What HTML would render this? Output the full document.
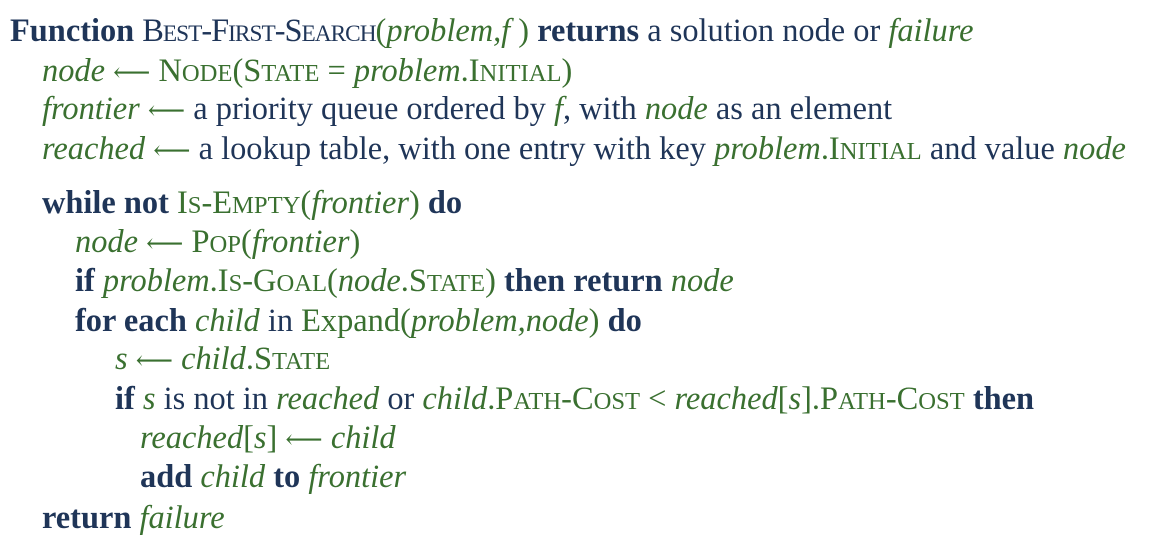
<!DOCTYPE html>
<html><head><meta charset="utf-8"><style>
body{margin:0;width:1164px;height:540px;background:#fff;overflow:hidden}
.l{position:absolute;white-space:nowrap;font-family:"Liberation Serif",serif;font-size:32.4px;line-height:34px;color:#1f3558}
.g{color:#3a7030}
i{font-style:italic}
b{font-weight:bold;color:#1f3558}
small{font-size:.76em}
.t{letter-spacing:-1px}
.t small{font-size:.72em}
.a{font-family:"DejaVu Serif","Liberation Serif",serif;font-size:26px}
</style></head><body>
<div class="l" style="left:10px;top:14px"><b>Function</b> <span class="t">B<small>EST</small>-F<small>IRST</small>-S<small>EARCH</small></span><span class="g">(<i>problem,f</i> )</span> <b>returns</b> a solution node or <i class="g">failure</i></div>
<div class="l g" style="left:42px;top:54px"><i>node</i> <span class="a">⟵</span> N<small>ODE</small>(S<small>TATE</small> = <i>problem</i>.I<small>NITIAL</small>)</div>
<div class="l" style="left:42px;top:92px"><span class="g"><i>frontier</i> <span class="a">⟵</span></span> a priority queue ordered by <i class="g">f</i>, with <i class="g">node</i> as an element</div>
<div class="l" style="left:42px;top:132px"><span class="g"><i>reached</i> <span class="a">⟵</span></span> a lookup table, with one entry with key <span class="g"><i>problem</i>.I<small>NITIAL</small></span> and value <i class="g">node</i></div>
<div class="l" style="left:42px;top:186px"><b>while not</b> <span class="g">I<small>S</small>-E<small>MPTY</small>(<i>frontier</i>)</span> <b>do</b></div>
<div class="l g" style="left:75px;top:225px"><i>node</i> <span class="a">⟵</span> P<small>OP</small>(<i>frontier</i>)</div>
<div class="l" style="left:75px;top:264px"><b>if</b> <span class="g"><i>problem</i>.I<small>S</small>-G<small>OAL</small>(<i>node</i>.S<small>TATE</small>)</span> <b>then return</b> <i class="g">node</i></div>
<div class="l" style="left:75px;top:304px"><b>for each</b> <i class="g">child</i> in <span class="g">Expand(<i>problem,node</i>)</span> <b>do</b></div>
<div class="l g" style="left:115px;top:342px"><i>s</i> <span class="a">⟵</span> <i>child</i>.S<small>TATE</small></div>
<div class="l" style="left:115px;top:382px"><b>if</b> <i class="g">s</i> is not in <i class="g">reached</i> or <span class="g"><i>child</i>.P<small>ATH</small>-C<small>OST</small> &lt; <i>reached</i>[<i>s</i>].P<small>ATH</small>-C<small>OST</small></span> <b>then</b></div>
<div class="l g" style="left:140px;top:421px"><i>reached</i>[<i>s</i>] <span class="a">⟵</span> <i>child</i></div>
<div class="l" style="left:140px;top:460px"><b>add</b> <i class="g">child</i> <b>to</b> <i class="g">frontier</i></div>
<div class="l" style="left:42px;top:501px"><b>return</b> <i class="g">failure</i></div>
</body></html>
